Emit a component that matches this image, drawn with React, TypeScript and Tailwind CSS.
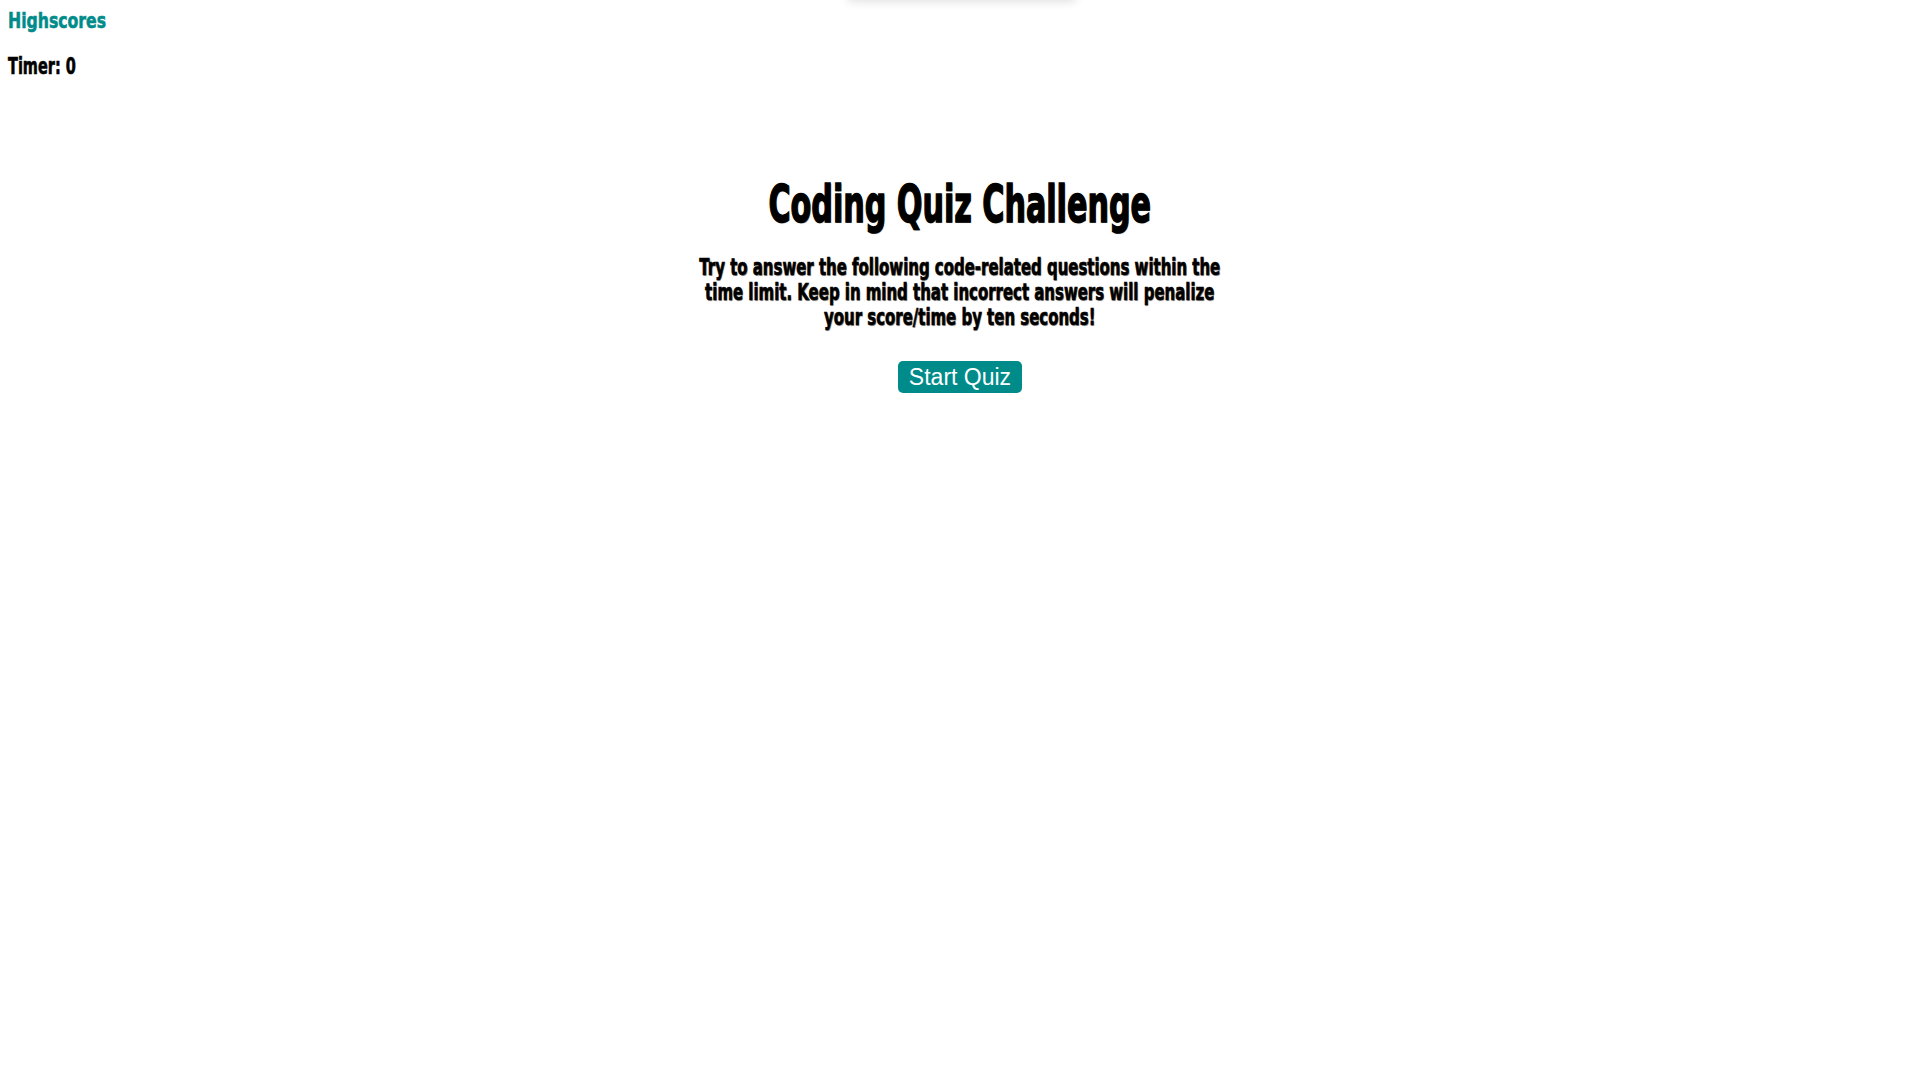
export default function App() {
  // Impact isn't installed, so DejaVu Sans Bold squeezed sideways stands in for it
  const heavy = "font-['Impact','DejaVu_Sans',sans-serif] font-bold";
  return (
    <div className="relative min-h-screen bg-white text-black">
      {/* faint shadow peeking in at the top edge */}
      <div className="absolute left-[847px] top-[-20px] h-[20px] w-[230px] rounded-md shadow-[0_2px_10px_rgba(0,0,0,0.12)]" />

      <header className="flex flex-col items-start px-2 pt-[9px]">
        <a
          href="#"
          className={`${heavy} inline-block origin-left scale-x-[0.73] text-[21.5px] leading-[24px] text-[#008b8b] [-webkit-text-stroke:0.6px_#008b8b]`}
        >
          Highscores
        </a>
        <div className={`${heavy} mt-[20px] inline-block origin-left scale-x-[0.63] text-[23px] leading-[26px] [-webkit-text-stroke:0.7px_black]`}>
          Timer: 0
        </div>
      </header>

      <main className="mt-[95px] flex flex-col items-center">
        <h1 className={`${heavy} scale-x-[0.58] text-[52px] leading-[60px] [-webkit-text-stroke:1.6px_black] [text-shadow:1px_1px_1px_#888]`}>
          Coding Quiz Challenge
        </h1>
        <p className={`${heavy} mt-[21px] scale-x-[0.65] text-center text-[23px] leading-[25px] [-webkit-text-stroke:0.7px_black] [text-shadow:1px_1px_1px_#888]`}>
          Try to answer the following code-related questions within the
          <br />
          time limit. Keep in mind that incorrect answers will penalize
          <br />
          your score/time by ten seconds!
        </p>
        <button className="mt-[31px] h-[32px] w-[124px] rounded-[5px] bg-[#008b8b] font-['Liberation_Sans',Arial,sans-serif] text-[23px] leading-[32px] text-white">
          Start Quiz
        </button>
      </main>
    </div>
  );
}
